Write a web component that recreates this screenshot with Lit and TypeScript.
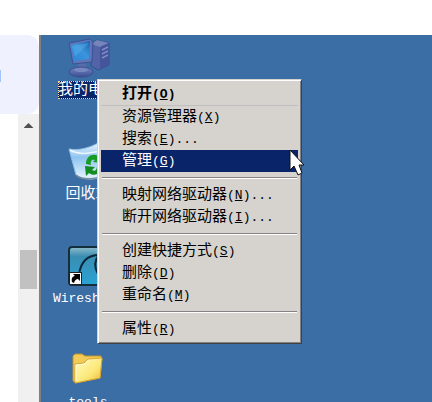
import { LitElement, html, css, svg } from "lit";
import { customElement } from "lit/decorators.js";

interface Entry {
  text: string;
  key: string;
  more?: boolean;
  kind?: "default" | "active";
}

const groups: Entry[][] = [
  [
    { text: "打开", key: "O", kind: "default" },
    { text: "资源管理器", key: "X" },
    { text: "搜索", key: "E", more: true },
    { text: "管理", key: "G", kind: "active" },
  ],
  [
    { text: "映射网络驱动器", key: "N", more: true },
    { text: "断开网络驱动器", key: "I", more: true },
  ],
  [
    { text: "创建快捷方式", key: "S" },
    { text: "删除", key: "D" },
    { text: "重命名", key: "M" },
  ],
  [{ text: "属性", key: "R" }],
];

const computer = svg`
  <defs>
    <linearGradient id="screen" x1="0" y1="1" x2="1" y2="0">
      <stop offset="0" stop-color="#2b84d8"/><stop offset=".55" stop-color="#3a95dc"/><stop offset="1" stop-color="#1c5fb0"/>
    </linearGradient>
    <linearGradient id="foot" x1="0" y1="0" x2="0" y2="1">
      <stop offset="0" stop-color="#7486c0"/><stop offset="1" stop-color="#3c4f95"/>
    </linearGradient>
  </defs>
  <path d="M25 5 31 2 43 5V27L32 32 25 28Z" fill="#5263a6" stroke="#3a4d8e"/>
  <path d="M31 2 43 5 34 9 25 6Z" fill="#7585ba"/>
  <path d="M34 9 43 5V27L34 31Z" fill="#44559c"/>
  <path d="M36 12 42 9M36 16 42 13M36 20 42 17" stroke="#7d8cc4" stroke-width="1.5"/>
  <path d="M12 23 19 23 21 33H12Z" fill="#596cab"/>
  <ellipse cx="15" cy="34" rx="12" ry="5" fill="url(#foot)" stroke="#3b4d90"/>
  <ellipse cx="15" cy="32" rx="7" ry="2" fill="#7788c0"/>
  <path d="M3 5 24 1 27 4 26 24 7 26Z" fill="#5f76b6" stroke="#3a5098"/>
  <path d="M5 7 24 3 23 21 8 23Z" fill="url(#screen)"/>
  <path d="M6 8 23 5 9 19Z" fill="#67b7ee" opacity=".35"/>`;

const bin = svg`
  <defs>
    <linearGradient id="glass" x1="0" y1="0" x2="0" y2="1">
      <stop offset="0" stop-color="#eaf6ff"/><stop offset=".4" stop-color="#8fc4f0"/><stop offset="1" stop-color="#e6f5ff"/>
    </linearGradient>
  </defs>
  <path d="M3 7C14 9 25 5 32 1L43 6 37 33C31 39 16 38 10 33Z" fill="url(#glass)" stroke="#8bbde3"/>
  <path d="M4 8C14 14 26 11 42 7" fill="none" stroke="#fff" stroke-width="1.5" opacity=".8"/>
  <path d="M10 33C16 38 30 38 36 33" fill="none" stroke="#788ca0" stroke-width="1.5"/>
  <path d="M20 22C20 14 27 11 32 14L35 11 36 21 27 20 29 18C26 17 24 19 25 23Z" fill="#159c22"/>
  <path d="M36 23C36 32 28 35 23 31L20 34 19 24 29 25 26 28C29 30 31 28 31 24Z" fill="#128c20"/>`;

const shark = svg`
  <defs>
    <linearGradient id="sea" x1="0" y1="0" x2="0" y2="1">
      <stop offset="0" stop-color="#8fbccb"/><stop offset=".25" stop-color="#3a8db2"/><stop offset="1" stop-color="#2aa3d4"/>
    </linearGradient>
  </defs>
  <rect x="3" y="1" width="39" height="38" rx="3" fill="url(#sea)" stroke="#142e3c" stroke-width="2"/>
  <path d="M13 28C15 16 21 9 33 9C28 15 28 21 32 28" fill="none" stroke="#0c2537" stroke-width="2"/>
  <rect x="3.500" y="26.500" width="12" height="12" fill="#fff" stroke="#222"/>
  <path d="M6 36C5 32 7 30 9 30L7 28H14V35L12 33C10 33 9 34 8 37Z" fill="#000"/>`;

const folder = svg`
  <defs>
    <linearGradient id="paper" x1="0" y1="0" x2="1" y2="1">
      <stop offset="0" stop-color="#fffbc4"/><stop offset=".6" stop-color="#fce878"/><stop offset="1" stop-color="#e9b93c"/>
    </linearGradient>
  </defs>
  <path d="M7 6 9 4H16L19 6 35 6 36 9 34 28 10 33 7 31Z" fill="#f1cb55" stroke="#c3922c"/>
  <path d="M9 14 18 13 22 9 36 8 34 28 9 33Z" fill="url(#paper)" stroke="#d5a53a"/>
  <path d="M10 31 10 15 19 14 23 10" fill="none" stroke="#fffbd5"/>`;

const shortcuts = [
  { label: "我的电脑", art: computer, selected: true },
  { label: "回收站", art: bin, selected: false },
  { label: "Wireshark", art: shark, selected: false },
  { label: "tools", art: folder, selected: false },
];

@customElement("app-root")
export class AppRoot extends LitElement {
  static styles = css`
    :host {
      display: flex;
      flex-direction: column;
      height: 100vh;
      padding-top: 35px;
      box-sizing: border-box;
      overflow: hidden;
      background: #fff;
      font: 15px/22px "Liberation Mono", "Noto Sans CJK SC", monospace;
    }
    .page {
      display: flex;
      flex: 1;
      min-height: 0;
    }
    .side {
      display: flex;
      flex-direction: column;
      width: 39px;
    }
    .bubble {
      height: 79px;
      box-sizing: border-box;
      padding-top: 35px;
      background: #eff1ff;
      border-radius: 0 12px 12px 0;
    }
    .mark {
      width: 1px;
      height: 12px;
      background: #a3c3f9;
    }
    .track {
      flex: 1;
      align-self: flex-end;
      display: flex;
      flex-direction: column;
      align-items: center;
      width: 21px;
      background: #f0f0f0;
    }
    .arrow {
      width: 10px;
      height: 5px;
      margin-top: 9px;
      background: #505050;
      clip-path: polygon(50% 0, 100% 100%, 0 100%);
    }
    .thumb {
      width: 17px;
      height: 39px;
      margin-top: 122px;
      background: #c1c1c1;
    }
    .desktop {
      position: relative;
      flex: 1;
      overflow: hidden;
      border-left: 2px solid #808080;
      background: #3a6ea5;
    }
    .icons {
      display: flex;
      flex-direction: column;
      align-items: flex-start;
      gap: 43px;
      padding: 3px 7px;
    }
    .shortcut {
      display: flex;
      flex-direction: column;
      align-items: center;
      gap: 3px;
      width: 80px;
      padding: 0;
      border: 0;
      background: none;
      color: #fff;
      font: inherit;
    }
    .art {
      display: block;
      width: 44px;
      height: 40px;
    }
    .label {
      height: 18px;
      box-sizing: border-box;
      line-height: 20px;
      white-space: nowrap;
    }
    .latin {
      font-size: 13px;
    }
    .selected {
      background: #0a246a;
      outline: 1px dotted #f5db95;
      outline-offset: -1px;
    }
    .menu {
      position: absolute;
      left: 56px;
      top: 44px;
      width: 205px;
      box-sizing: border-box;
      padding: 3px;
      border: 1px solid;
      border-color: #d6d3ce #424142 #424142 #d6d3ce;
      box-shadow: inset 1px 1px #fff, inset -1px -1px #848284;
      background: #d6d3ce;
    }
    .item {
      display: block;
      width: 100%;
      height: 22px;
      padding: 2px 0 0 21px;
      border: 0;
      background: none;
      color: #000;
      font: inherit;
      line-height: 20px;
      text-align: left;
      white-space: nowrap;
    }
    .default {
      height: 23px;
      border-bottom: 1px solid #bfbfc2;
      font-weight: bold;
    }
    .active {
      background: #0a246a;
      color: #fff;
    }
    .key {
      font-size: 13px;
    }
    .rule {
      height: 1px;
      margin: 5px 1px;
      border: 0;
      border-top: 1px solid #848284;
      background: #fff;
    }
    .pointer {
      position: absolute;
      left: 247px;
      top: 114px;
      width: 18px;
      height: 28px;
    }
  `;

  render() {
    return html`
      <div class="page">
        <div class="side">
          <div class="bubble"><div class="mark"></div></div>
          <div class="track">
            <div class="arrow"></div>
            <div class="thumb"></div>
          </div>
        </div>
        <main class="desktop">
          <div class="icons">
            ${shortcuts.map(
              (s) => html`<button class="shortcut">
                <svg class="art" viewBox="0 0 44 40" aria-hidden="true">${s.art}</svg>
                <span class="label ${s.selected ? "selected" : ""} ${/^\w+$/.test(s.label) ? "latin" : ""}">${s.label}</span>
              </button>`
            )}
          </div>
          <div class="menu" role="menu">
            ${groups.map(
              (g, i) => html`${i ? html`<hr class="rule" />` : ""}${g.map(
                (e) => html`<button class="item ${e.kind ?? ""}" role="menuitem">${e.text}<span class="key">(<u>${e.key}</u>)${e.more ? "..." : ""}</span></button>`
              )}`
            )}
          </div>
          <svg class="pointer" viewBox="0 0 18 28" aria-hidden="true">
            <path d="M2 1V21L6 17 10 26 14 24 11 16H16Z" fill="#fff" stroke="#111" />
          </svg>
        </main>
      </div>
    `;
  }
}
